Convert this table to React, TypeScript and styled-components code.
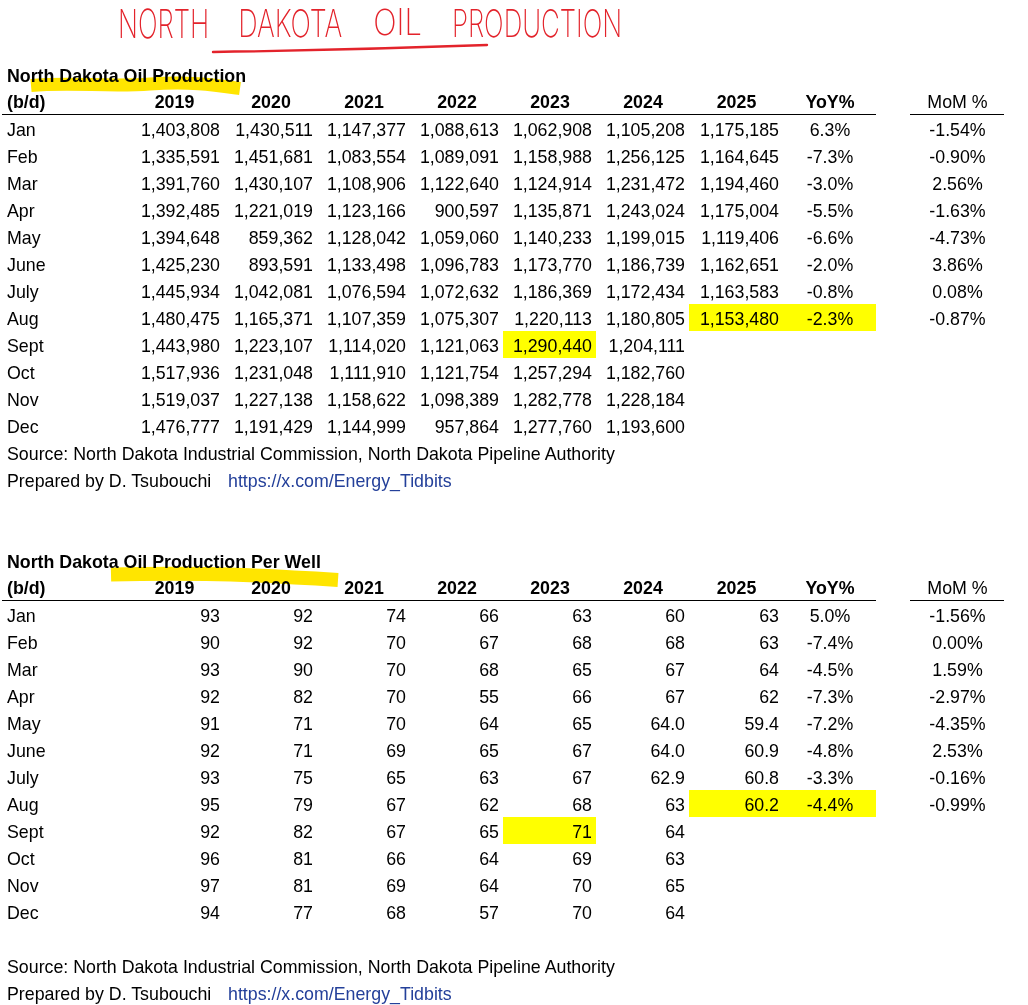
import { FC, useLayoutEffect, useRef, useState } from 'react'
import styled, { createGlobalStyle, css } from 'styled-components'

const GlobalStyle = createGlobalStyle`
  html, body {
    margin: 0;
    padding: 0;
    background: #fff;
  }
  body {
    font-family: "Liberation Sans", Arial, sans-serif;
    color: #000;
  }
`

// label, 2019..2024, 2025, YoY, spacer, MoM
const COLUMNS = '122px 100px 93px 93px 93px 93px 93px 94px 93px 34px 94px'
const YEARS = ['2019', '2020', '2021', '2022', '2023', '2024', '2025']

const production: string[][] = [
  ['Jan', '1,403,808', '1,430,511', '1,147,377', '1,088,613', '1,062,908', '1,105,208', '1,175,185', '6.3%', '-1.54%'],
  ['Feb', '1,335,591', '1,451,681', '1,083,554', '1,089,091', '1,158,988', '1,256,125', '1,164,645', '-7.3%', '-0.90%'],
  ['Mar', '1,391,760', '1,430,107', '1,108,906', '1,122,640', '1,124,914', '1,231,472', '1,194,460', '-3.0%', '2.56%'],
  ['Apr', '1,392,485', '1,221,019', '1,123,166', '900,597', '1,135,871', '1,243,024', '1,175,004', '-5.5%', '-1.63%'],
  ['May', '1,394,648', '859,362', '1,128,042', '1,059,060', '1,140,233', '1,199,015', '1,119,406', '-6.6%', '-4.73%'],
  ['June', '1,425,230', '893,591', '1,133,498', '1,096,783', '1,173,770', '1,186,739', '1,162,651', '-2.0%', '3.86%'],
  ['July', '1,445,934', '1,042,081', '1,076,594', '1,072,632', '1,186,369', '1,172,434', '1,163,583', '-0.8%', '0.08%'],
  ['Aug', '1,480,475', '1,165,371', '1,107,359', '1,075,307', '1,220,113', '1,180,805', '1,153,480', '-2.3%', '-0.87%'],
  ['Sept', '1,443,980', '1,223,107', '1,114,020', '1,121,063', '1,290,440', '1,204,111', '', '', ''],
  ['Oct', '1,517,936', '1,231,048', '1,111,910', '1,121,754', '1,257,294', '1,182,760', '', '', ''],
  ['Nov', '1,519,037', '1,227,138', '1,158,622', '1,098,389', '1,282,778', '1,228,184', '', '', ''],
  ['Dec', '1,476,777', '1,191,429', '1,144,999', '957,864', '1,277,760', '1,193,600', '', '', ''],
]

const perWell: string[][] = [
  ['Jan', '93', '92', '74', '66', '63', '60', '63', '5.0%', '-1.56%'],
  ['Feb', '90', '92', '70', '67', '68', '68', '63', '-7.4%', '0.00%'],
  ['Mar', '93', '90', '70', '68', '65', '67', '64', '-4.5%', '1.59%'],
  ['Apr', '92', '82', '70', '55', '66', '67', '62', '-7.3%', '-2.97%'],
  ['May', '91', '71', '70', '64', '65', '64.0', '59.4', '-7.2%', '-4.35%'],
  ['June', '92', '71', '69', '65', '67', '64.0', '60.9', '-4.8%', '2.53%'],
  ['July', '93', '75', '65', '63', '67', '62.9', '60.8', '-3.3%', '-0.16%'],
  ['Aug', '95', '79', '67', '62', '68', '63', '60.2', '-4.4%', '-0.99%'],
  ['Sept', '92', '82', '67', '65', '71', '64', '', '', ''],
  ['Oct', '96', '81', '66', '64', '69', '63', '', '', ''],
  ['Nov', '97', '81', '69', '64', '70', '65', '', '', ''],
  ['Dec', '94', '77', '68', '57', '70', '64', '', '', ''],
]

// yellow cells, as "row:column" with column 0 = month label
const MARKS = ['8:5', '7:7', '7:8']

// handwritten words: target width, font size, gap after
const SCRIBBLE = [
  { word: 'NORTH', width: 91, size: 40, gap: 29 },
  { word: 'DAKOTA', width: 104, size: 38, gap: 31 },
  { word: 'OIL', width: 49, size: 36, gap: 30 },
  { word: 'PRODUCTION', width: 170, size: 38, gap: 0 },
]

interface WordProps {
  word: string
  width: number
  size: number
  gap: number
}

// a narrow, tall scrawl: the font is shrunk to the target width, then stretched back up
const Word: FC<WordProps> = ({ word, width, size, gap }) => {
  const ref = useRef<HTMLSpanElement>(null)
  const [ratio, setRatio] = useState(1)

  useLayoutEffect(() => {
    if (ref.current && ref.current.offsetWidth > 0) {
      setRatio(width / ref.current.offsetWidth)
    }
  }, [width, size])

  return (
    <WordSlot $gap={gap}>
      <WordInk ref={ref} style={{ fontSize: size * ratio, transform: `scaleY(${1 / ratio})` }}>
        {word}
      </WordInk>
    </WordSlot>
  )
}

interface SheetProps {
  title: string
  rows: string[][]
  stroke: string
  strokeWidth: number
  blankBeforeSource?: boolean
}

const Sheet: FC<SheetProps> = ({ title, rows, stroke, strokeWidth, blankBeforeSource }) => {
  return (
    <SheetBlock>
      <Highlighter viewBox="0 0 1028 60" aria-hidden>
        <path d={stroke} stroke="#ffe500" strokeWidth={strokeWidth} fill="none" strokeLinecap="butt" />
      </Highlighter>
      <Row>
        <Title>{title}</Title>
      </Row>
      <Row>
        <Cell $rule $bold>
          (b/d)
        </Cell>
        {YEARS.map((y) => (
          <Cell key={y} $rule $bold $align="center">
            {y}
          </Cell>
        ))}
        <Cell $rule $bold $align="center">
          YoY%
        </Cell>
        <Cell />
        <Cell $rule $align="center">
          MoM %
        </Cell>
      </Row>
      {rows.map((r, ri) => (
        <Row key={r[0]}>
          {r.map((v, ci) => {
            const mark = MARKS.includes(`${ri}:${ci}`)
            const align = ci === 0 ? 'left' : ci >= 8 ? 'center' : 'right'
            if (ci === 9) {
              return [
                <Cell key="gap" />,
                <Cell key={ci} $align="center">
                  {v}
                </Cell>,
              ]
            }
            return (
              <Cell key={ci} $align={align} $mark={mark}>
                {v}
              </Cell>
            )
          })}
        </Row>
      ))}
      {blankBeforeSource && <Row />}
      <Row>
        <Note>Source: North Dakota Industrial Commission, North Dakota Pipeline Authority</Note>
      </Row>
      <Row>
        <Prepared>Prepared by D. Tsubouchi</Prepared>
        <Link>https://x.com/Energy_Tidbits</Link>
      </Row>
    </SheetBlock>
  )
}

const App: FC = () => {
  return (
    <Page>
      <GlobalStyle />
      <Scribble>
        {SCRIBBLE.map((w) => (
          <Word key={w.word} {...w} />
        ))}
        <Underline viewBox="0 0 1028 61" aria-hidden>
          <path d="M213 52 Q 350 50 487 45" stroke="#e3232b" strokeWidth={2.4} fill="none" strokeLinecap="round" />
        </Underline>
      </Scribble>
      <Sheet
        title="North Dakota Oil Production"
        rows={production}
        stroke="M31 24.5 C 70 21, 110 26, 150 23 S 215 24, 240 27.5"
        strokeWidth={13}
      />
      <Spacer />
      <Sheet
        title="North Dakota Oil Production Per Well"
        rows={perWell}
        stroke="M111 27.5 C 170 26, 230 26, 338 33"
        strokeWidth={14}
        blankBeforeSource
      />
    </Page>
  )
}

export default App

const Page = styled.div`
  width: 1028px;
  padding-left: 2px;
  box-sizing: border-box;
`

const Scribble = styled.div`
  position: relative;
  display: flex;
  align-items: flex-start;
  height: 61px;
  padding-left: 116px;
  box-sizing: border-box;
`

const WordSlot = styled.div<{ $gap: number }>`
  flex: none;
  height: 50px;
  margin-right: ${({ $gap }) => $gap}px;
  white-space: nowrap;
`

const WordInk = styled.span`
  display: inline-block;
  transform-origin: left top;
  color: #e3232b;
  font-family: Inter, "Noto Sans", "DejaVu Sans", sans-serif;
  font-weight: 200;
  line-height: normal;
`

const Underline = styled.svg`
  position: absolute;
  top: 0;
  left: -2px;
  width: 1028px;
  height: 61px;
  pointer-events: none;
`

const SheetBlock = styled.section`
  position: relative;
`

const Highlighter = styled.svg`
  position: absolute;
  top: 0;
  left: -2px;
  width: 1028px;
  height: 60px;
  pointer-events: none;
  mix-blend-mode: multiply;
  z-index: 1;
`

const Spacer = styled.div`
  height: 54px;
`

const Row = styled.div`
  display: grid;
  grid-template-columns: ${COLUMNS};
  height: 27px;
`

const textCell = css`
  display: flex;
  align-items: flex-end;
  height: 27px;
  box-sizing: border-box;
  padding: 0 4px 2px 5px;
  font-size: 17.8px;
  line-height: 20px;
  white-space: nowrap;
`

const Cell = styled.div<{ $align?: 'left' | 'right' | 'center'; $bold?: boolean; $mark?: boolean; $rule?: boolean }>`
  ${textCell};
  justify-content: ${({ $align }) => ($align === 'right' ? 'flex-end' : $align === 'center' ? 'center' : 'flex-start')};
  font-weight: ${({ $bold }) => ($bold ? 700 : 400)};
  background: ${({ $mark }) => ($mark ? '#ffff00' : 'transparent')};
  border-bottom: ${({ $rule }) => ($rule ? '1px solid #000' : 'none')};
`

const Title = styled.div`
  ${textCell};
  grid-column: 1 / -1;
  font-weight: 700;
`

const Note = styled.div`
  ${textCell};
  grid-column: 1 / -1;
`

const Prepared = styled.div`
  ${textCell};
  grid-column: 1 / 3;
`

const Link = styled.div`
  ${textCell};
  grid-column: 3 / -1;
  padding-left: 4px;
  color: #24409a;
`
